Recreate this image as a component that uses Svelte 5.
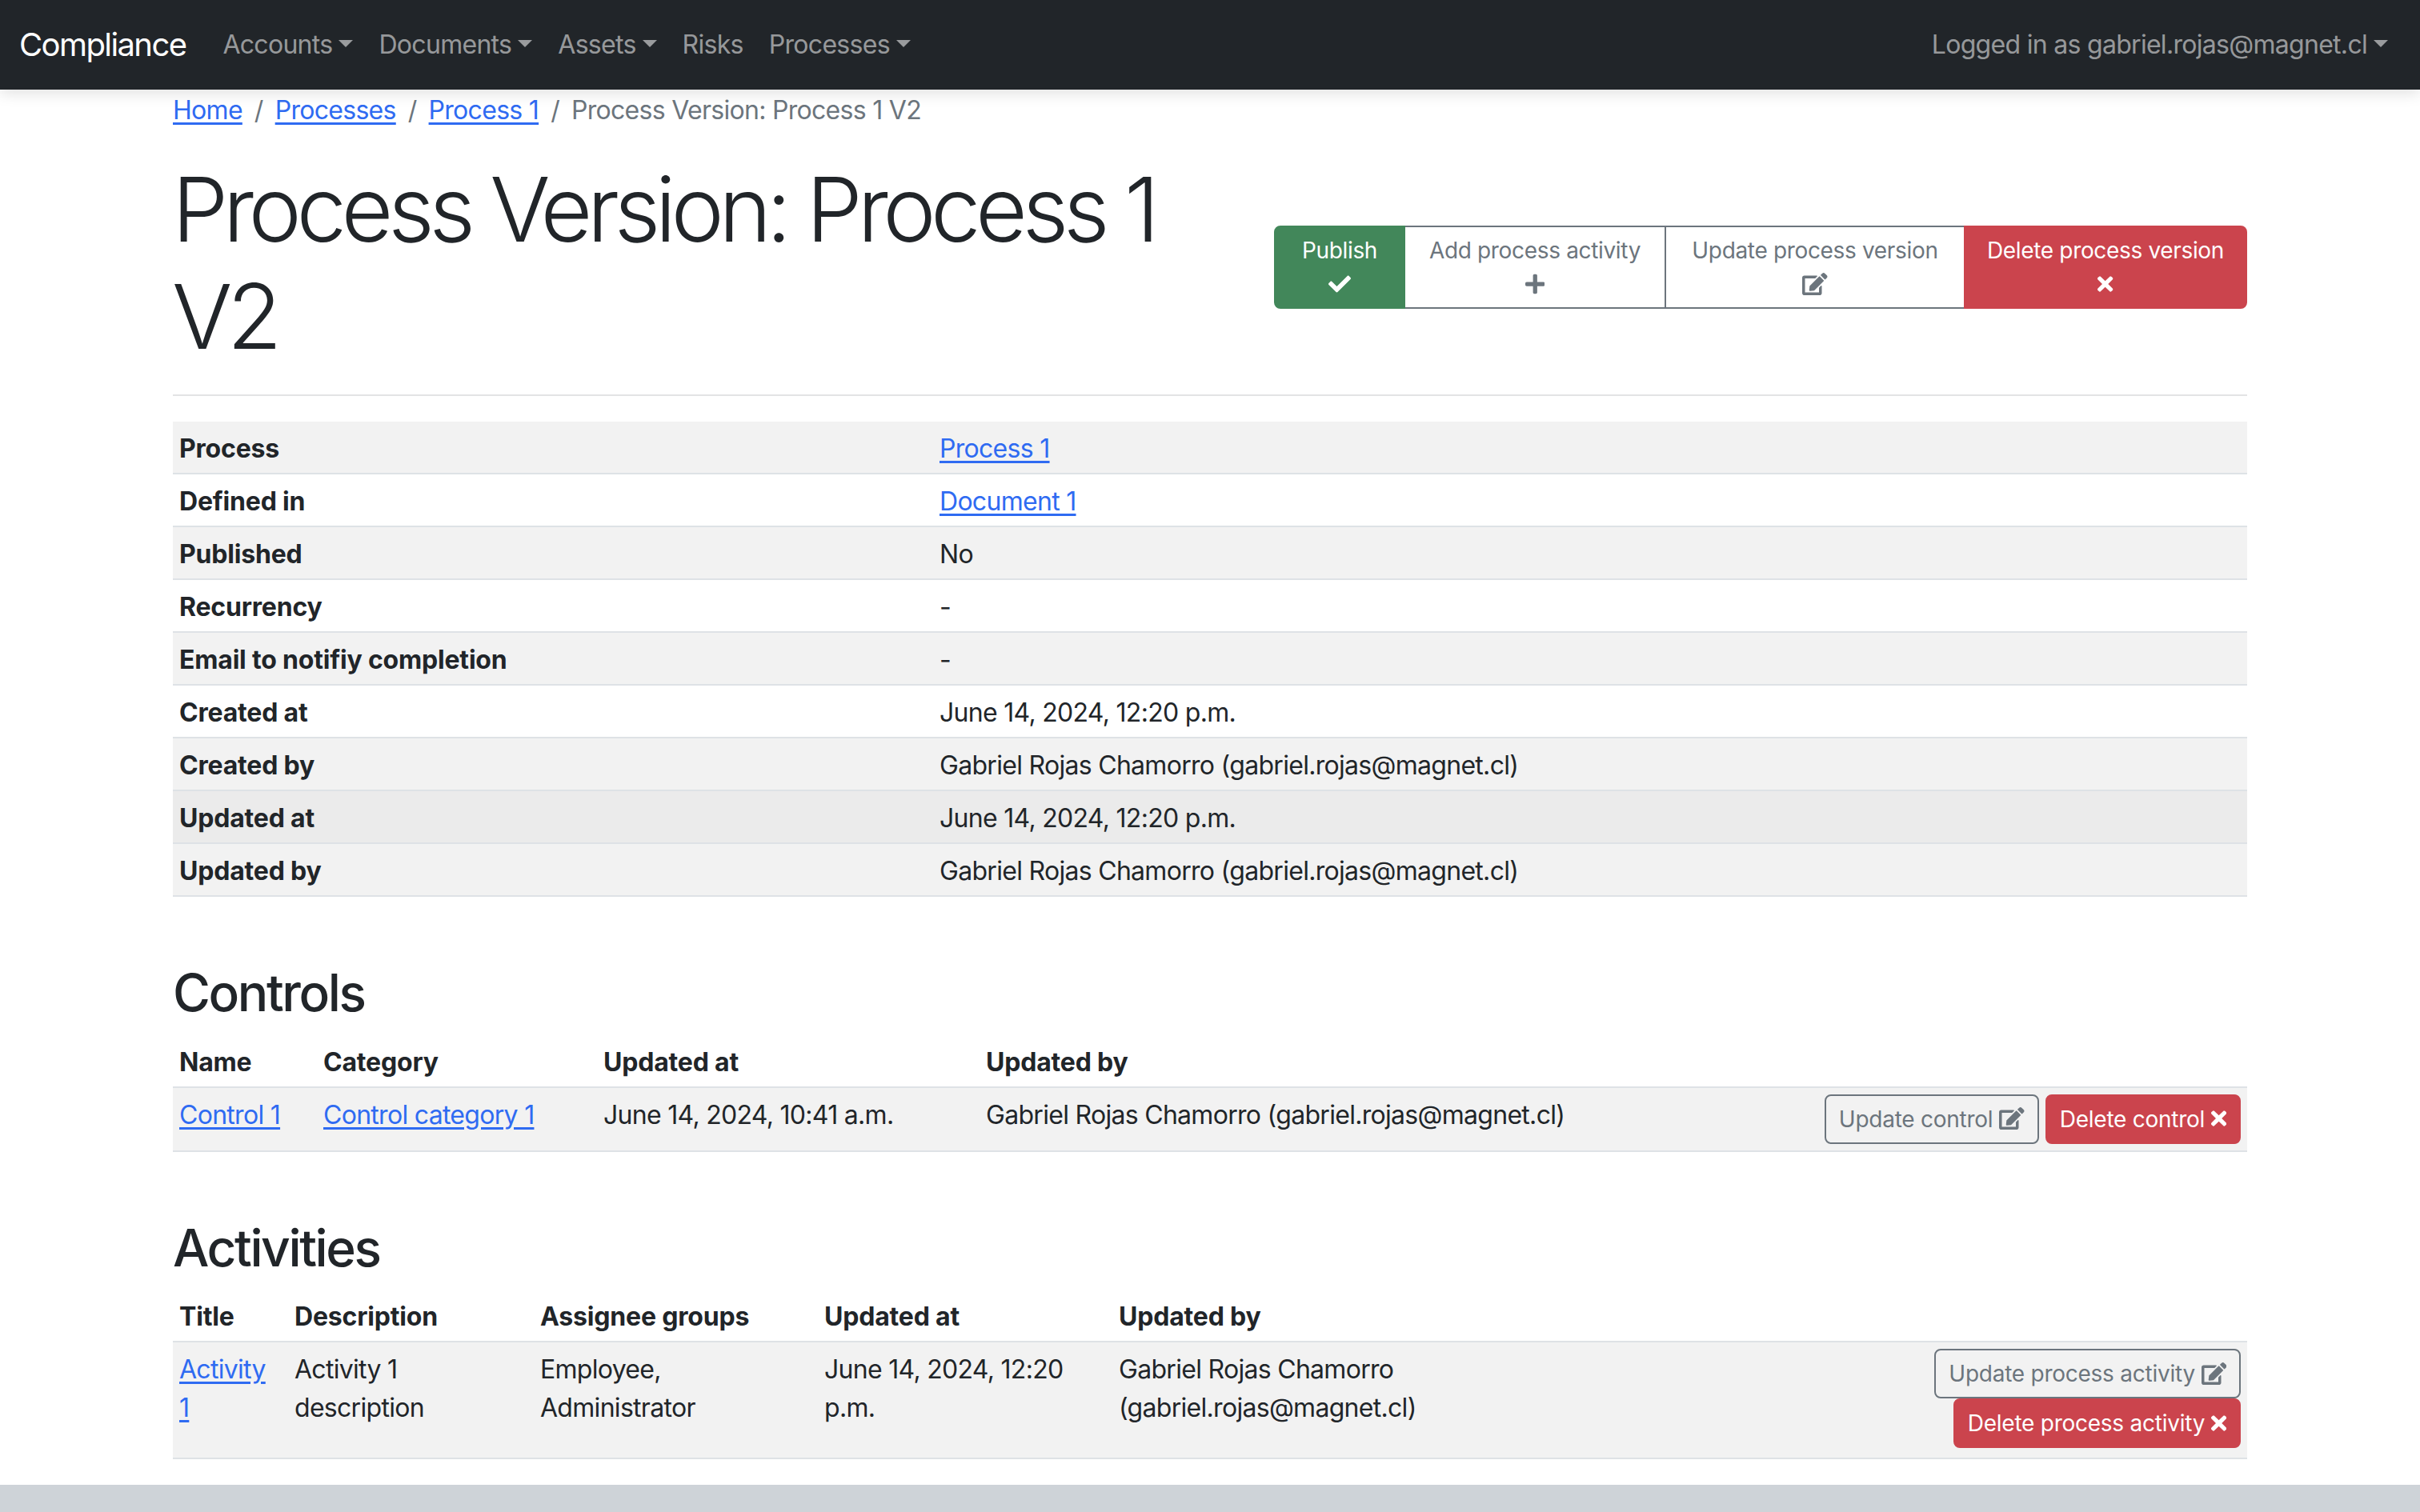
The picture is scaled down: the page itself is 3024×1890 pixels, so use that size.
<script>
  const navItems = [
    { label: "Accounts", caret: true },
    { label: "Documents", caret: true },
    { label: "Assets", caret: true },
    { label: "Risks", caret: false },
    { label: "Processes", caret: true },
  ];

  const details = [
    { label: "Process", value: "Process 1", link: true },
    { label: "Defined in", value: "Document 1", link: true },
    { label: "Published", value: "No" },
    { label: "Recurrency", value: "-" },
    { label: "Email to notifiy completion", value: "-" },
    { label: "Created at", value: "June 14, 2024, 12:20 p.m." },
    { label: "Created by", value: "Gabriel Rojas Chamorro (gabriel.rojas@magnet.cl)" },
    { label: "Updated at", value: "June 14, 2024, 12:20 p.m." },
    { label: "Updated by", value: "Gabriel Rojas Chamorro (gabriel.rojas@magnet.cl)" },
  ];

  const icons = {
    check: { box: "0 0 512 512", w: 28, d: "M173.898 439.404l-166.4-166.4c-9.997-9.997-9.997-26.206 0-36.204l36.203-36.204c9.997-9.998 26.207-9.998 36.204 0L192 312.69 432.095 72.596c9.997-9.997 26.207-9.997 36.204 0l36.203 36.204c9.997 9.997 9.997 26.206 0 36.204l-294.4 294.401c-9.998 9.997-26.207 9.997-36.204-.001z" },
    plus: { box: "0 0 448 512", w: 24.5, d: "M416 208H272V64c0-17.67-14.33-32-32-32h-32c-17.67 0-32 14.33-32 32v144H32c-17.67 0-32 14.33-32 32v32c0 17.67 14.33 32 32 32h144v144c0 17.67 14.33 32 32 32h32c17.67 0 32-14.33 32-32V304h144c17.67 0 32-14.33 32-32v-32c0-17.67-14.33-32-32-32z" },
    edit: { box: "0 0 576 512", w: 31.5, d: "M402.6 83.2l90.2 90.2c3.8 3.8 3.8 10 0 13.8L274.4 405.6l-92.8 10.3c-12.4 1.4-22.9-9.1-21.5-21.5l10.3-92.8L388.8 83.2c3.8-3.8 10-3.8 13.8 0zm162-22.9l-48.8-48.8c-15.2-15.2-39.9-15.2-55.2 0l-35.4 35.4c-3.8 3.8-3.8 10 0 13.8l90.2 90.2c3.8 3.8 10 3.8 13.8 0l35.4-35.4c15.2-15.3 15.2-40 0-55.2zM384 346.2V448H64V128h229.8c3.2 0 6.2-1.3 8.5-3.5l40-40c7.6-7.6 2.2-20.5-8.5-20.5H48C21.5 64 0 85.5 0 112v352c0 26.5 21.5 48 48 48h352c26.5 0 48-21.5 48-48V306.2c0-10.7-12.9-16-20.5-8.5l-40 40c-2.2 2.3-3.5 5.3-3.5 8.5z" },
    times: { box: "0 0 352 512", w: 19.25, d: "M242.72 256l100.07-100.07c12.28-12.28 12.28-32.19 0-44.48l-22.24-22.24c-12.28-12.28-32.19-12.28-44.48 0L176 189.28 75.93 89.21c-12.28-12.28-32.19-12.28-44.48 0L9.21 111.45c-12.28 12.28-12.28 32.19 0 44.48L109.28 256 9.21 356.07c-12.28 12.28-12.28 32.19 0 44.48l22.24 22.24c12.28 12.28 32.2 12.28 44.48 0L176 322.72l100.07 100.07c12.28 12.28 32.2 12.28 44.48 0l22.24-22.24c12.28-12.28 12.28-32.19 0-44.48L242.72 256z" },
  };

  const groupButtons = [
    { label: "Publish", icon: "check", kind: "green", width: 164 },
    { label: "Add process activity", icon: "plus", kind: "outline", width: 328 },
    { label: "Update process version", icon: "edit", kind: "outline", width: 376 },
    { label: "Delete process version", icon: "times", kind: "red", width: 354 },
  ];
</script>

{#snippet icon(name)}
  <svg class="icon" viewBox={icons[name].box} width={icons[name].w} height="28" aria-hidden="true">
    <path fill="currentColor" d={icons[name].d} />
  </svg>
{/snippet}

<nav class="navbar">
  <a class="brand" href="#top">Compliance</a>
  <ul class="nav-links">
    {#each navItems as item}
      <li><a href="#top" class:caret={item.caret}>{item.label}</a></li>
    {/each}
  </ul>
  <a class="user caret" href="#top">Logged in as gabriel.rojas@magnet.cl</a>
</nav>

<main class="container">
  <ol class="breadcrumb">
    <li><a href="#top">Home</a></li>
    <li><a href="#top">Processes</a></li>
    <li><a href="#top">Process 1</a></li>
    <li class="current">Process Version: Process 1 V2</li>
  </ol>

  <header class="page-head">
    <h1>Process Version: Process 1 V2</h1>
    <div class="btn-group">
      {#each groupButtons as b}
        <button class={b.kind} style:width="{b.width}px">{b.label}<br />{@render icon(b.icon)}</button>
      {/each}
    </div>
  </header>
  <hr />

  <table class="details">
    <tbody>
      {#each details as row, i}
        <tr class:striped={i % 2 === 0} class:hovered={i === 7}>
          <th>{row.label}</th>
          <td>
            {#if row.link}<a href="#top">{row.value}</a>{:else}{row.value}{/if}
          </td>
        </tr>
      {/each}
    </tbody>
  </table>

  <h3>Controls</h3>
  <table class="list">
    <colgroup>
      <col style="width:180px" />
      <col style="width:350px" />
      <col style="width:478px" />
      <col style="width:1000px" />
      <col />
    </colgroup>
    <thead>
      <tr><th>Name</th><th>Category</th><th>Updated at</th><th>Updated by</th><th></th></tr>
    </thead>
    <tbody>
      <tr>
        <td><a href="#top">Control 1</a></td>
        <td><a href="#top">Control category 1</a></td>
        <td>June 14, 2024, 10:41 a.m.</td>
        <td>Gabriel Rojas Chamorro (gabriel.rojas@magnet.cl)</td>
        <td class="actions">
          <button class="sm outline">Update control {@render icon("edit")}</button>
          <button class="sm red">Delete control {@render icon("times")}</button>
        </td>
      </tr>
    </tbody>
  </table>

  <h3>Activities</h3>
  <table class="list activities">
    <colgroup>
      <col style="width:144px" />
      <col style="width:307px" />
      <col style="width:355px" />
      <col style="width:368px" />
      <col style="width:720px" />
      <col />
    </colgroup>
    <thead>
      <tr><th>Title</th><th>Description</th><th>Assignee groups</th><th>Updated at</th><th>Updated by</th><th></th></tr>
    </thead>
    <tbody>
      <tr>
        <td><a href="#top">Activity 1</a></td>
        <td>Activity 1 description</td>
        <td>Employee, Administrator</td>
        <td>June 14, 2024, 12:20 p.m.</td>
        <td>Gabriel Rojas Chamorro (gabriel.rojas@magnet.cl)</td>
        <td class="actions">
          <button class="sm outline">Update process activity {@render icon("edit")}</button>
          <button class="sm red">Delete process activity {@render icon("times")}</button>
        </td>
      </tr>
    </tbody>
  </table>
</main>

<footer class="footer"></footer>

<style>
  :global(body) {
    margin: 0;
    background: #fff;
    color: #212529;
    font-family: Inter, "Liberation Sans", sans-serif;
    font-size: 32px;
    line-height: 1.5;
    letter-spacing: -0.022em;
  }

  a {
    color: #2f6bf2;
    text-decoration: underline;
    text-underline-offset: 4px;
  }

  .navbar {
    display: flex;
    align-items: center;
    height: 112px;
    padding: 0 24px;
    background: #212529;
    box-shadow: 0 4px 18px rgba(0, 0, 0, 0.13);
    box-sizing: border-box;
    position: relative;
  }

  .brand {
    color: #fff;
    font-size: 40px;
    letter-spacing: -0.04em;
    text-decoration: none;
    margin-right: 30px;
  }

  .nav-links {
    display: flex;
    list-style: none;
    margin: 0;
    padding: 0;
    flex: 1;
  }

  .nav-links a,
  .user {
    display: block;
    padding: 0 16px;
    color: rgba(255, 255, 255, 0.55);
    text-decoration: none;
  }

  .caret::after {
    content: "";
    display: inline-block;
    margin-left: 8px;
    vertical-align: 8px;
    border-top: 9.6px solid;
    border-right: 9.6px solid transparent;
    border-left: 9.6px solid transparent;
  }

  .container {
    width: 2592px;
    margin: 0 auto;
  }

  .breadcrumb {
    display: flex;
    list-style: none;
    margin: 0 0 30px;
    padding: 2px 0 0;
  }

  .breadcrumb li + li {
    padding-left: 15px;
  }

  .breadcrumb li + li::before {
    content: "/";
    padding-right: 15px;
    color: #6c757d;
  }

  .breadcrumb .current {
    color: #6c757d;
  }

  .page-head {
    display: flex;
    align-items: center;
    gap: 48px;
  }

  h1 {
    flex: 1;
    margin: 2px 0 14px -1px;
    font-size: 112px;
    font-weight: 300;
    line-height: 1.2;
    letter-spacing: -0.0585em;
  }

  .btn-group {
    display: flex;
    flex-shrink: 0;
  }

  button {
    font: inherit;
    font-size: 28px;
    line-height: 42px;
    letter-spacing: -0.012em;
    padding: 8px 32px;
    border: 2px solid #6c757d;
    background: transparent;
    color: #6c757d;
    text-align: center;
  }

  .btn-group button {
    margin-left: -2px;
    padding: 8px 0;
  }

  .btn-group button:first-child {
    border-radius: 8px 0 0 8px;
    margin-left: 0;
  }

  .btn-group button:last-child {
    border-radius: 0 8px 8px 0;
  }

  button.green {
    background: #42875a;
    border-color: #42875a;
    color: #fff;
    position: relative;
  }

  button.red {
    background: #cb444d;
    border-color: #cb444d;
    color: #fff;
    position: relative;
  }

  button.sm {
    padding: 8px 16px;
    border-radius: 8px;
    letter-spacing: -0.009em;
  }

  .icon {
    display: inline-block;
    vertical-align: -3.5px;
  }

  hr {
    margin: 16px 0 32px;
    border: 0;
    border-top: 2px solid #e3e4e5;
  }

  table {
    width: 100%;
    border-collapse: collapse;
    margin-bottom: 32px;
  }

  .list {
    table-layout: fixed;
  }

  th,
  td {
    padding: 10px 8px 6px;
    text-align: left;
    font-weight: 400;
    vertical-align: top;
    border-bottom: 2px solid #dee2e6;
  }

  th {
    font-weight: 700;
    letter-spacing: -0.006em;
  }

  .details th {
    width: 934px;
  }

  .striped {
    background: #f2f2f2;
  }

  .hovered {
    background: #ebebeb;
  }

  .list tbody tr {
    background: #f2f2f2;
  }

  td.actions {
    padding: 8px;
    text-align: right;
  }

  .activities td.actions {
    padding-bottom: 12px;
  }

  h3 {
    margin: 82px 0 14px;
    font-size: 64px;
    font-weight: 500;
    line-height: 1.2;
    letter-spacing: -0.0375em;
  }

  .footer {
    height: 34px;
    background: #ced3d8;
  }
</style>
